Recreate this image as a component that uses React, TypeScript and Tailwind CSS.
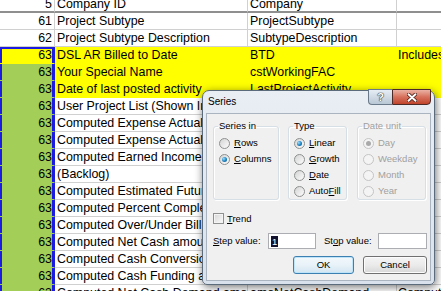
import React from "react";

type Fill = "none" | "yellow" | "green";
type Row = {
  n: string;
  b: string;
  c: string;
  d?: string;
  fa: Fill; // fill of column A
  fr: Fill; // fill of columns B..D
  sel?: "top" | "mid";
};

const rows: Row[] = [
  { n: "5", b: "Company ID", c: "Company", fa: "none", fr: "none" },
  { n: "61", b: "Project Subtype", c: "ProjectSubtype", fa: "none", fr: "none" },
  { n: "62", b: "Project Subtype Description", c: "SubtypeDescription", fa: "none", fr: "none" },
  { n: "63", b: "DSL AR Billed to Date", c: "BTD", d: "Includes billings", fa: "yellow", fr: "yellow", sel: "top" },
  { n: "63", b: "Your Special Name", c: "cstWorkingFAC", fa: "green", fr: "yellow", sel: "mid" },
  { n: "63", b: "Date of last posted activity", c: "LastProjectActivity", fa: "green", fr: "yellow", sel: "mid" },
  { n: "63", b: "User Project List (Shown In Lookups)", c: "UserProjectList", fa: "green", fr: "none", sel: "mid" },
  { n: "63", b: "Computed Expense Actual Cost", c: "amoExpenseActual", fa: "green", fr: "none", sel: "mid" },
  { n: "63", b: "Computed Expense Actual Billing", c: "amoExpenseBill", fa: "green", fr: "none", sel: "mid" },
  { n: "63", b: "Computed Earned Income", c: "amoEarnedIncome", fa: "green", fr: "none", sel: "mid" },
  { n: "63", b: "(Backlog)", c: "amoBacklog", fa: "green", fr: "none", sel: "mid" },
  { n: "63", b: "Computed Estimated Future Cost", c: "amoEstFuture", fa: "green", fr: "none", sel: "mid" },
  { n: "63", b: "Computed Percent Complete", c: "pctComplete", fa: "green", fr: "none", sel: "mid" },
  { n: "63", b: "Computed Over/Under Billing", c: "amoOverUnder", fa: "green", fr: "none", sel: "mid" },
  { n: "63", b: "Computed Net Cash amount", c: "amoNetCash", fa: "green", fr: "none", sel: "mid" },
  { n: "63", b: "Computed Cash Conversion", c: "amoCashConversion", fa: "green", fr: "none", sel: "mid" },
  { n: "63", b: "Computed Cash Funding and", c: "amoCashFunding", fa: "green", fr: "none", sel: "mid" },
  { n: "63", b: "Computed Net Cash Demand amount", c: "amoNetCashDemand", d: "Computed", fa: "green", fr: "none", sel: "mid" },
];

const bg: Record<Fill, string> = {
  none: "bg-white",
  yellow: "bg-[#ffff00]",
  green: "bg-[#a3cf59]",
};
const lineB: Record<Fill, string> = {
  none: "border-b-[#d0d0d0]",
  yellow: "border-b-[#ffff00]",
  green: "border-b-[#a3cf59]",
};
const lineR: Record<Fill, string> = {
  none: "border-r-[#d0d0d0]",
  yellow: "border-r-[#ffff00]",
  green: "border-r-[#a3cf59]",
};

function Sheet() {
  return (
    <div className="-mt-[4px] flex flex-col text-[12.4px] leading-[16px] text-black">
      {rows.map((r, i) => {
        const bottom = i === 0 ? "border-b-2 border-b-[#8f8f8f]" : "border-b";
        const selShadow =
          r.sel === "top"
            ? "shadow-[inset_2px_0_0_#1c1ce0,inset_-2px_0_0_#1c1ce0,inset_0_2px_0_#1c1ce0] border-r-[#1c1ce0]"
            : r.sel === "mid"
            ? "shadow-[inset_2px_0_0_#1c1ce0,inset_-2px_0_0_#1c1ce0] border-r-[#1c1ce0]"
            : lineR[r.fa];
        return (
          <div key={i} className="flex h-[17px]">
            <div
              className={`w-[55px] shrink-0 overflow-hidden whitespace-nowrap border-r pr-[2px] text-right ${bottom} ${bg[r.fa]} ${
                i === 0 ? "" : lineB[r.fa]
              } ${selShadow}`}
            >
              {r.n}
            </div>
            <div
              className={`w-[193px] shrink-0 overflow-hidden whitespace-nowrap border-r pl-[2px] ${bottom} ${bg[r.fr]} ${
                i === 0 ? "" : lineB[r.fr]
              } ${lineR[r.fr]}`}
            >
              {r.b}
            </div>
            <div
              className={`w-[149px] shrink-0 overflow-hidden whitespace-nowrap border-r pl-[2px] ${bottom} ${bg[r.fr]} ${
                i === 0 ? "" : lineB[r.fr]
              } ${lineR[r.fr]}`}
            >
              {r.c}
            </div>
            <div
              className={`flex-1 overflow-hidden whitespace-nowrap pl-[1px] ${bottom} ${bg[r.fr]} ${
                i === 0 ? "" : lineB[r.fr]
              }`}
            >
              {r.d ?? ""}
            </div>
          </div>
        );
      })}
    </div>
  );
}

function Radio({ checked, disabled }: { checked?: boolean; disabled?: boolean }) {
  return (
    <span
      className={`flex h-[11px] w-[11px] shrink-0 items-center justify-center rounded-full border ${
        disabled
          ? "border-[#c4c4c4] bg-[#f4f4f4]"
          : "border-[#8e8f8f] bg-linear-to-br from-[#d4d4d4] to-[#fdfdfd]"
      }`}
    >
      {checked && (
        <span
          className={`h-[5px] w-[5px] rounded-full ${
            disabled
              ? "bg-[#a9a9a9]"
              : "bg-[radial-gradient(circle_at_35%_35%,#9be0ff,#1a7fbf_55%,#0a4f80)]"
          }`}
        />
      )}
    </span>
  );
}

function Option({
  children,
  checked,
  disabled,
}: {
  children: React.ReactNode;
  checked?: boolean;
  disabled?: boolean;
}) {
  return (
    <div className={`flex h-[16px] items-center gap-[4px] ${disabled ? "text-[#a0a0a0]" : ""}`}>
      <Radio checked={checked} disabled={disabled} />
      <span className="whitespace-nowrap leading-[12px]">{children}</span>
    </div>
  );
}

function Group({
  label,
  width,
  disabled,
  children,
}: {
  label: string;
  width: string;
  disabled?: boolean;
  children: React.ReactNode;
}) {
  return (
    <fieldset
      className={`h-[80px] ${width} shrink-0 rounded-[3px] border border-[#d5dfe5] px-[5px] shadow-[inset_1px_1px_0_#fff,1px_1px_0_#fff]`}
    >
      <legend className={`ml-[-1px] px-[1px] leading-[12px] ${disabled ? "text-[#a0a0a0]" : ""}`}>{label}</legend>
      <div className="flex flex-col pt-[3px]">{children}</div>
    </fieldset>
  );
}

function Button({ children, primary }: { children: React.ReactNode; primary?: boolean }) {
  return (
    <div
      className={`flex h-[18px] items-center justify-center rounded-[3px] border bg-linear-to-b leading-[12px] ${
        primary
          ? "w-[61px] border-[#3c7fb1] from-[#f4f9fc] via-[#e8f2f8] to-[#d3e6f2] shadow-[inset_0_0_0_1px_#bde4f8]"
          : "w-[64px] border-[#707070] from-[#f4f4f4] via-[#ebebeb] to-[#d7d7d7] shadow-[inset_0_0_0_1px_#fcfcfc]"
      }`}
    >
      {children}
    </div>
  );
}

function SeriesDialog() {
  return (
    <div className="absolute left-[202px] top-[90px] flex h-[195px] w-[233px] flex-col rounded-t-[7px] rounded-b-[5px] border border-[#5c6b7b] bg-linear-to-b from-[#e9eef4] to-[#d9e2ec] text-[9.5px] text-black shadow-[1px_2px_8px_rgba(0,0,0,0.55)]">
      {/* title bar */}
      <div className="flex h-[22px] items-start justify-between">
        <span className="pl-[5px] pt-[5px] text-[10px] leading-[12px]">Series</span>
        <div className="mr-[3px] -mt-[2px] flex h-[16px]">
          <div className="flex w-[24px] items-center justify-center rounded-bl-[4px] border border-r-0 border-[#6b7a8a] bg-linear-to-b from-[#e6edf4] to-[#b9c7d5] text-[11px] font-bold leading-[12px] text-white [text-shadow:0_0_1px_#333,0_0_1px_#333,0_0_1px_#333]">
            ?
          </div>
          <div className="flex w-[39px] items-center justify-center rounded-br-[4px] border border-[#4e2a26] bg-linear-to-b from-[#eab2a5] via-[#d6705c] to-[#c0432b]">
            <svg width="10" height="9" viewBox="0 0 10 9">
              <path d="M1.5 1.2 L8.5 7.8 M8.5 1.2 L1.5 7.8" stroke="#4a1a12" strokeWidth="3.6" strokeLinecap="round" />
              <path d="M1.5 1.2 L8.5 7.8 M8.5 1.2 L1.5 7.8" stroke="#ffffff" strokeWidth="2" strokeLinecap="round" />
            </svg>
          </div>
        </div>
      </div>

      {/* client area */}
      <div className="mx-[3px] flex h-[168px] flex-col border border-[#a9b4c0] bg-[#f0f0f0] pl-[6px] pr-[3px] pt-[6px]">
        <div className="flex">
          <Group label="Series in" width="w-[66px]">
            <Option>
              <u>R</u>ows
            </Option>
            <Option checked>
              <u>C</u>olumns
            </Option>
          </Group>
          <div className="ml-[9px]">
            <Group label="Type" width="w-[59px]">
              <Option checked>
                <u>L</u>inear
              </Option>
              <Option>
                <u>G</u>rowth
              </Option>
              <Option>
                <u>D</u>ate
              </Option>
              <Option>
                Auto<u>F</u>ill
              </Option>
            </Group>
          </div>
          <div className="ml-[10px]">
            <Group label="Date unit" width="w-[69px]" disabled>
              <Option checked disabled>
                Day
              </Option>
              <Option disabled>Weekday</Option>
              <Option disabled>Month</Option>
              <Option disabled>Year</Option>
            </Group>
          </div>
        </div>

        <div className="mt-[12px] flex h-[13px] items-center gap-[3px]">
          <span className="h-[11px] w-[11px] border border-[#8e8f8f] bg-linear-to-br from-[#d6d6d6] to-[#fbfbfb] shadow-[inset_0_0_0_1px_#f4f4f4]" />
          <span className="leading-[12px]">
            <u>T</u>rend
          </span>
        </div>

        <div className="mt-[8px] flex h-[16px] items-center">
          <span className="w-[55px] leading-[12px]">
            <u>S</u>tep value:
          </span>
          <div className="flex h-[16px] w-[48px] items-center border border-[#abadb3] bg-white pl-[2px]">
            <span className="bg-[#12122e] px-[1px] leading-[11px] text-white">1</span>
          </div>
          <span className="ml-[8px] w-[54px] leading-[12px]">
            St<u>o</u>p value:
          </span>
          <div className="h-[16px] w-[49px] border border-[#abadb3] bg-white" />
        </div>

        <div className="mt-[7px] flex justify-end gap-[9px]">
          <Button primary>OK</Button>
          <Button>Cancel</Button>
        </div>
      </div>
    </div>
  );
}

export default function App() {
  return (
    <div className="relative h-[291px] w-[441px] overflow-hidden bg-white font-['Liberation_Sans',Arial,sans-serif]">
      <Sheet />
      <SeriesDialog />
    </div>
  );
}
